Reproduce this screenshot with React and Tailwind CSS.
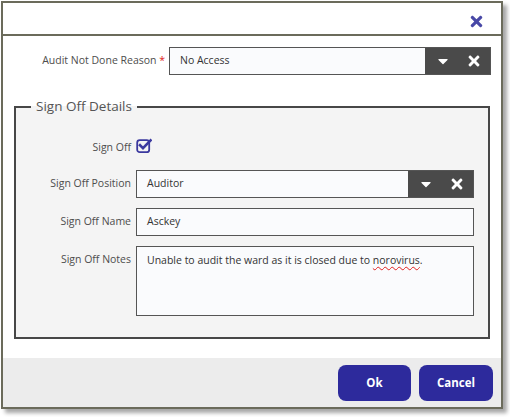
import React from "react";
import { FaTimes, FaCaretDown } from "react-icons/fa";

function CheckIcon() {
  return (
    <svg width="16" height="16" viewBox="0 0 16 16" className="block">
      <rect x="1.2" y="2.2" width="12" height="12" rx="2.5" fill="none" stroke="#3b399f" strokeWidth="1.8" />
      <path d="M4 7.2 L7 10.2 L14.6 2.4" fill="none" stroke="#3b399f" strokeWidth="2.6" strokeLinecap="square" />
    </svg>
  );
}

function SelectBox({ value }) {
  return (
    <div className="flex h-[28px] border border-[#555] bg-[#fafbfd]">
      <div className="flex flex-1 items-center pl-[10px] text-[10.5px] text-[#333]">{value}</div>
      <div className="flex w-[65px] items-center bg-[#4a4a4a] text-white">
        <div className="flex w-[33px] justify-center pl-[2px]">
          <FaCaretDown size={16} />
        </div>
        <div className="flex w-[32px] justify-center">
          <FaTimes size={16} />
        </div>
      </div>
    </div>
  );
}

export default function App() {
  return (
    <div className="h-[417px] w-[510px] bg-white pl-[1px] pt-[1px]" style={{ fontFamily: '"Open Sans", "Noto Sans", sans-serif' }}>
      <div className="flex h-[408px] w-[502px] flex-col border-2 border-[#6b6b5b] bg-white shadow-[4px_4px_4px_rgba(0,0,0,0.35)]">
        <div className="flex h-[33px] shrink-0 items-center justify-end border-b-2 border-[#6b6b5b] pr-[16px] pt-[6px]">
          <FaTimes size={17} className="text-[#4848a6]" />
        </div>
        <div className="flex-1 bg-white px-[11px] pt-[11px]">
          <div className="flex items-center">
            <div className="w-[155px] shrink-0 pr-[4px] text-right text-[10.5px] text-[#4d4d4d]">
              Audit Not Done Reason <span className="text-[#e02020]">*</span>
            </div>
            <div className="-mr-[1px] flex-1">
              <SelectBox value="No Access" />
            </div>
          </div>
          <fieldset className="mt-[22px] border-2 border-[#474747] bg-[#f4f4f4] pb-[21px] pr-[14px]">
            <legend className="ml-[15px] px-[5px] text-[13.5px] leading-[19px] text-[#555]">Sign Off Details</legend>
            <div className="mt-[22px] grid grid-cols-[120px_1fr] gap-y-[10px]">
              <div className="flex h-[20px] items-center justify-end pr-[5px] text-[10.5px] text-[#4d4d4d]">Sign Off</div>
              <div className="-mt-[2px] mb-[4px] flex h-[20px] items-center">
                <CheckIcon />
              </div>
              <div className="flex h-[28px] items-center justify-end pr-[5px] text-[10.5px] text-[#4d4d4d]">Sign Off Position</div>
              <SelectBox value="Auditor" />
              <div className="flex h-[28px] items-center justify-end pr-[5px] text-[10.5px] text-[#4d4d4d]">Sign Off Name</div>
              <div className="flex h-[28px] items-center border border-[#555] bg-[#fafbfd] pl-[10px] text-[10.5px] text-[#333]">Asckey</div>
              <div className="flex h-[28px] items-center justify-end pr-[5px] text-[10.5px] text-[#4d4d4d]">Sign Off Notes</div>
              <div className="h-[70px] border border-[#555] bg-[#fafbfd] pl-[10px] pt-[6px] text-[10.5px] text-[#333]">
                Unable to audit the ward as it is closed due to{" "}
                <span className="underline decoration-[#e02020] decoration-wavy decoration-1 underline-offset-2">norovirus</span>.
              </div>
            </div>
          </fieldset>
        </div>
        <div className="flex h-[49px] shrink-0 justify-end gap-[8px] bg-[#ececec] pr-[8px] pt-[7px]">
          <button className="h-[36px] w-[73px] rounded-[8px] bg-[#2d2a9c] text-[11.5px] font-bold text-white">Ok</button>
          <button className="h-[36px] w-[74px] rounded-[8px] bg-[#2d2a9c] text-[11.5px] font-bold text-white">Cancel</button>
        </div>
      </div>
    </div>
  );
}
